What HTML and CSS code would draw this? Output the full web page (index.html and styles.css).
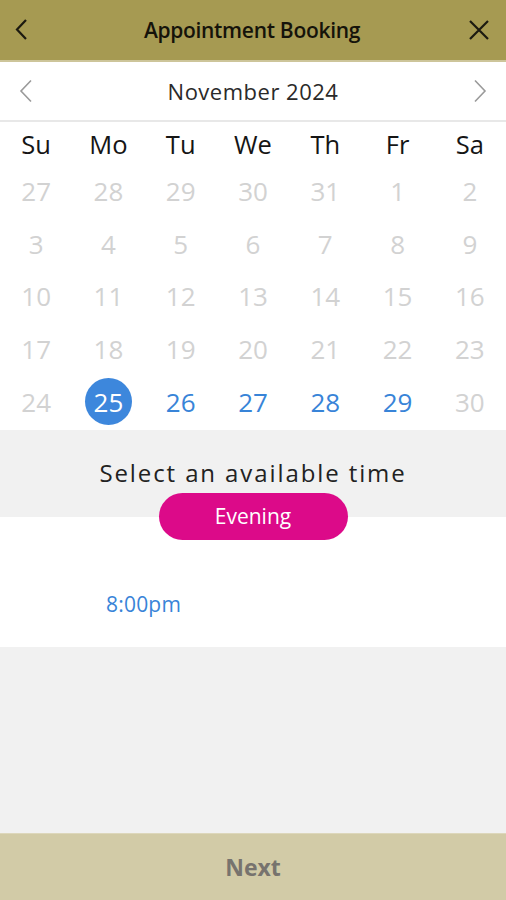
FILE: index.html
```html
<!DOCTYPE html>
<html>
<head>
<meta charset="utf-8">
<link rel="stylesheet" href="styles.css">
</head>
<body>
<div class="app">
  <header class="topbar">
    <svg class="icon back" width="24" height="24" viewBox="0 0 24 24"><path d="M13 2 L4 11.5 L13 21" fill="none" stroke="#1c1a10" stroke-width="2.2"/></svg>
    <h1 class="title">Appointment Booking</h1>
    <svg class="icon close" width="24" height="24" viewBox="0 0 24 24"><path d="M3 3 L21 21 M21 3 L3 21" fill="none" stroke="#1c1a10" stroke-width="2.2"/></svg>
  </header>
  <div class="monthbar">
    <svg class="chev" width="16" height="24" viewBox="0 0 16 24"><path d="M13 1.5 L3 12 L13 22.5" fill="none" stroke="#9a9a9a" stroke-width="1.6"/></svg>
    <div class="month">November 2024</div>
    <svg class="chev" width="16" height="24" viewBox="0 0 16 24"><path d="M3 1.5 L13 12 L3 22.5" fill="none" stroke="#9a9a9a" stroke-width="1.6"/></svg>
  </div>
  <div class="calendar">
    <div class="dow">Su</div><div class="dow">Mo</div><div class="dow">Tu</div><div class="dow">We</div><div class="dow">Th</div><div class="dow">Fr</div><div class="dow">Sa</div>
    <div class="d">27</div><div class="d">28</div><div class="d">29</div><div class="d">30</div><div class="d">31</div><div class="d">1</div><div class="d">2</div>
    <div class="d">3</div><div class="d">4</div><div class="d">5</div><div class="d">6</div><div class="d">7</div><div class="d">8</div><div class="d">9</div>
    <div class="d">10</div><div class="d">11</div><div class="d">12</div><div class="d">13</div><div class="d">14</div><div class="d">15</div><div class="d">16</div>
    <div class="d">17</div><div class="d">18</div><div class="d">19</div><div class="d">20</div><div class="d">21</div><div class="d">22</div><div class="d">23</div>
    <div class="d">24</div><div class="d"><span class="sel">25</span></div><div class="d avail">26</div><div class="d avail">27</div><div class="d avail">28</div><div class="d avail">29</div><div class="d">30</div>
  </div>
  <section class="timehead">
    <div class="prompt">Select an available time</div>
    <div class="pill">Evening</div>
  </section>
  <section class="slots">
    <div class="slot">8:00pm</div>
  </section>
  <div class="filler"></div>
  <footer class="footer">Next</footer>
</div>
</body>
</html>
```

FILE: styles.css
```css
* { box-sizing: border-box; }
html, body { margin: 0; padding: 0; }
body {
  font-family: "Open Sans", "Noto Sans", sans-serif;
  background: #f1f1f1;
}
.app {
  width: 506px;
  height: 900px;
  display: flex;
  flex-direction: column;
}
.topbar {
  height: 62px;
  background: #a69a52;
  border-bottom: 2px solid #cdc59a;
  display: flex;
  align-items: center;
  justify-content: space-between;
  padding: 0 15px 0 13px;
}
.icon { display: block; }
.title {
  margin: 0;
  font-size: 21px;
  font-weight: 600;
  color: #15130a;
  letter-spacing: -0.3px;
}
.monthbar {
  height: 60px;
  background: #fff;
  border-bottom: 2px solid #e8e8e8;
  display: flex;
  align-items: center;
  justify-content: space-between;
  padding: 0 18px 0 18px;
}
.month {
  font-size: 22px;
  letter-spacing: 0.5px;
  color: #2a2a2a;
}
.calendar {
  background: #fff;
  display: grid;
  grid-template-columns: repeat(7, 1fr);
  grid-template-rows: 43px;
  grid-auto-rows: 52.6px;
  padding-bottom: 2px;
}
.dow {
  display: flex;
  align-items: center;
  justify-content: center;
  font-size: 25.5px;
  color: #151515;
}
.d {
  display: flex;
  align-items: center;
  justify-content: center;
  font-size: 26px;
  color: #d2d2d2;
}
.d.avail { color: #3884d8; }
.sel {
  width: 47px;
  height: 47px;
  border-radius: 50%;
  background: #3d87dc;
  color: #fff;
  display: flex;
  align-items: center;
  justify-content: center;
}
.timehead {
  background: #f1f1f1;
  display: flex;
  flex-direction: column;
  align-items: center;
  padding-top: 27px;
}
.prompt {
  font-size: 24px;
  line-height: 32px;
  letter-spacing: 1.9px;
  color: #222;
}
.pill {
  margin-top: 4px;
  margin-bottom: -23px;
  position: relative;
  z-index: 1;
  width: 189px;
  height: 47px;
  border-radius: 24px;
  background: #dc0a89;
  color: #fff;
  font-size: 21px;
  display: flex;
  align-items: center;
  justify-content: center;
}
.slots {
  height: 130px;
  background: #fff;
  padding: 73px 0 0 106px;
}
.slot {
  font-size: 21px;
  line-height: 28px;
  letter-spacing: 0.2px;
  color: #3884d8;
}
.filler { flex: 1; background: #f1f1f1; }
.footer {
  height: 67px;
  background: #d2cba7;
  border-top: 1px solid #ddd7bb;
  display: flex;
  align-items: center;
  justify-content: center;
  font-size: 23px;
  font-weight: 700;
  color: #77736e;
}
```
